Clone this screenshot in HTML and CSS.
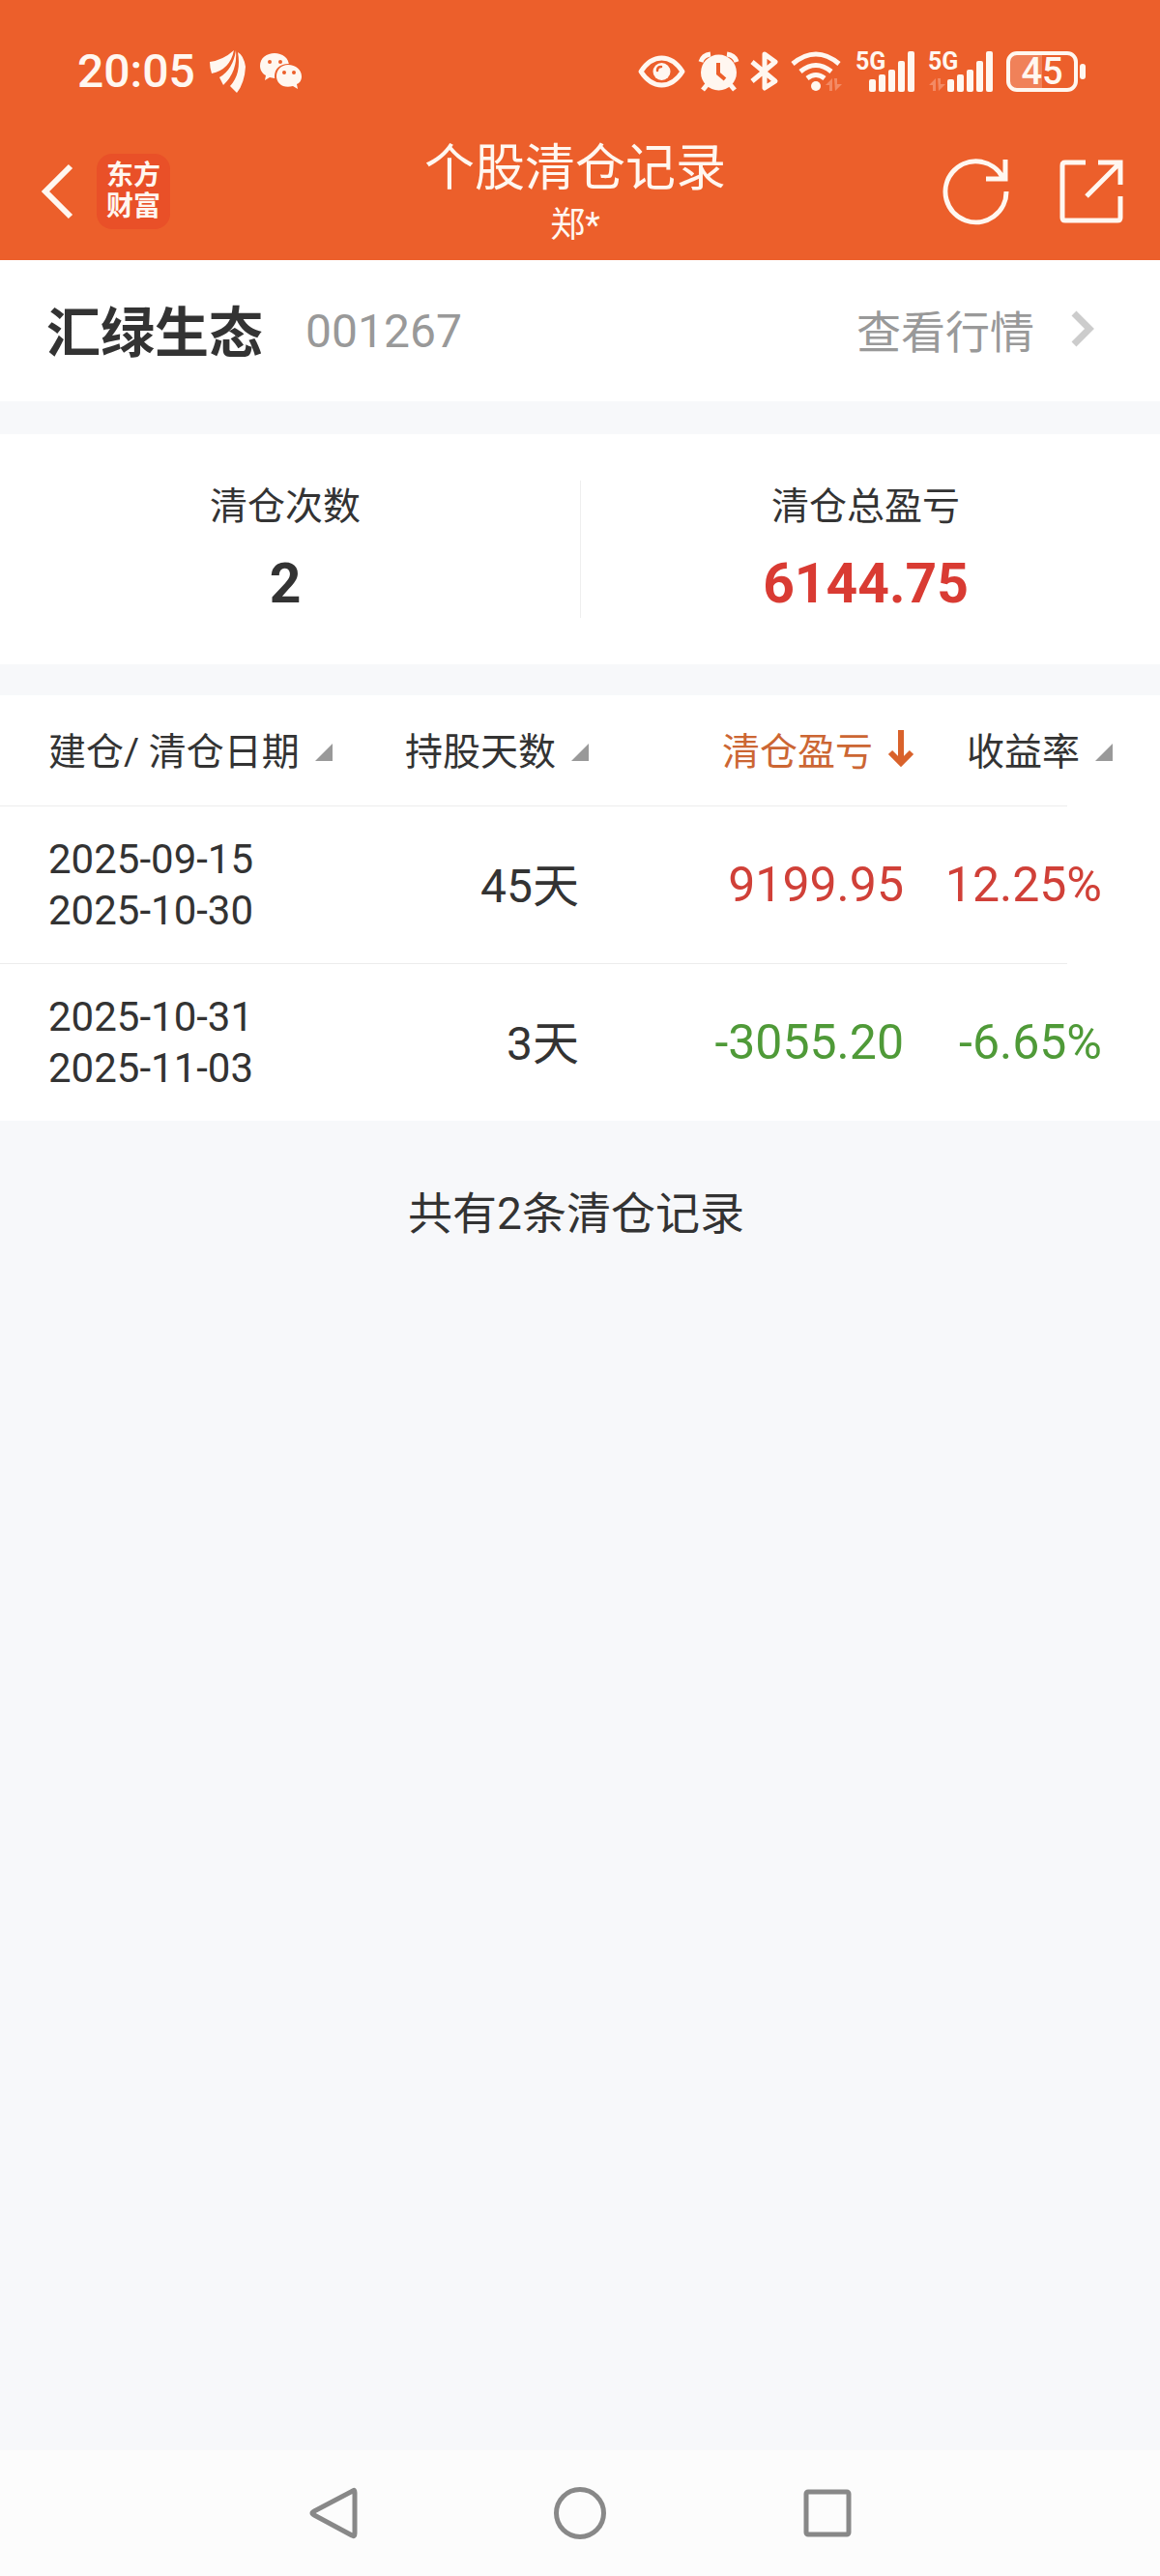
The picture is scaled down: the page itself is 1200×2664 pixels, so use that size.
FILE: index.html
```html
<!DOCTYPE html>
<html lang="zh-CN">
<head>
<meta charset="utf-8">
<meta name="viewport" content="width=device-width, initial-scale=1">
<title>个股清仓记录</title>
<link rel="stylesheet" href="styles.css">
</head>
<body>
<header class="top">
  <div class="status">
    <time class="clock">20:05</time>
    <svg class="feather" width="38" height="44" viewBox="0 0 38 44" fill="currentColor" aria-hidden="true"><path d="M0 12Q14 10 25 0Q21 20 2 24Q0 18 0 12ZM27 0Q29 22 14 36L10 28Q24 20 27 0ZM29 2Q35 5 37 17Q36 34 28 44L21 37Q33 24 29 2Z"/></svg>
    <svg class="wechat" width="44" height="38" viewBox="0 0 44 38" aria-hidden="true"><path fill="currentColor" d="M15 0C23 0 30 5 30 13C30 21 23 26 15 26L10 25L5 28L6 23C2 21 0 17 0 13C0 5 7 0 15 0Z"/><path class="cut" d="M29 11C37 11 44 16 44 24C44 28 42 31 39 33L40 37L34 35C23 38 15 32 15 24C15 16 21 11 29 11Z"/><path fill="currentColor" d="M29 12C37 12 43 17 43 24C43 28 41 31 38 32L39 37L34 34C24 37 17 31 17 24C17 17 22 12 29 12Z"/><g class="hole"><circle cx="10" cy="9" r="2"/><circle cx="21" cy="9" r="2"/><circle cx="25" cy="20" r="2"/><circle cx="35" cy="20" r="2"/></g></svg>
    <div class="indicators">
      <svg width="49" height="34" viewBox="0 0 49 34" fill="none" aria-hidden="true"><path d="M3 17Q12 3 24.500 3Q37 3 46 17Q37 31 24.500 31Q12 31 3 17Z" stroke="currentColor" stroke-width="5" stroke-linejoin="round"/><circle cx="24.500" cy="17" r="9" fill="currentColor"/><path class="ink" d="M20 16Q20 12 24 12" stroke-width="2.500" stroke-linecap="round"/></svg>
      <svg width="41" height="42" viewBox="0 0 41 42" aria-hidden="true"><g fill="none" stroke="currentColor" stroke-width="5"><path d="M2 11Q4 4 12 3M29 3Q37 4 39 11M9 34L4 40M32 34L37 40"/></g><circle cx="20.500" cy="22" r="18.500" fill="currentColor"/><path class="ink" d="M20 12V23L27 29" fill="none" stroke-width="4"/></svg>
      <svg width="27" height="42" viewBox="0 0 27 42" fill="none" stroke="currentColor" stroke-width="5" stroke-linejoin="round" aria-hidden="true"><path d="M0 11L24 31L13 38V3L24 11L0 31"/></svg>
      <svg width="52" height="42" viewBox="0 0 52 42" fill="none" stroke="currentColor" stroke-width="5" aria-hidden="true"><path d="M1 13Q25-7 49 13M9 21Q25 8 41 21M16 28Q25 21 34 28"/><circle cx="25" cy="36" r="5" fill="currentColor" stroke="none"/><path class="faint" d="M35 35L42 28V41H39V35ZM44 28H47V34H52L45 41Z"/></svg>
      <svg width="61" height="42" viewBox="0 0 61 42" fill="currentColor" role="img" aria-label="5G"><text class="net" x="0" y="19">5G</text><rect x="14" y="29" width="7" height="13" rx="2"/><rect x="24" y="24" width="7" height="18" rx="2"/><rect x="34" y="19" width="7" height="23" rx="2"/><rect x="44" y="10" width="7" height="32" rx="2"/><rect x="54" y="0" width="7" height="42" rx="2"/></svg>
      <svg width="67" height="42" viewBox="0 0 67 42" fill="currentColor" role="img" aria-label="5G"><text class="net" x="0" y="19">5G</text><path class="faint" d="M1 35L8 28V41H5V35ZM10 28H13V34H18L11 41Z"/><rect x="20" y="29" width="7" height="13" rx="2"/><rect x="30" y="24" width="7" height="18" rx="2"/><rect x="40" y="19" width="7" height="23" rx="2"/><rect x="50" y="10" width="7" height="32" rx="2"/><rect x="60" y="0" width="7" height="42" rx="2"/></svg>
      <svg width="82" height="42" viewBox="0 0 82 42" role="img" aria-label="45%"><path class="charge" d="M10 3H37V39H10Q3 39 3 32V10Q3 3 10 3Z"/><rect x="2" y="2" width="70" height="38" rx="9" fill="none" stroke="currentColor" stroke-width="4"/><rect x="76" y="13" width="6" height="16" rx="3" fill="currentColor"/><text class="level" x="37" y="34" text-anchor="middle">45</text></svg>
    </div>
  </div>
  <div class="bar">
    <div class="lead">
      <button class="icon-button" type="button" aria-label="返回"><svg width="32" height="56" viewBox="0 0 32 56" fill="none" stroke="currentColor" stroke-width="6"><path d="M30 2L4 28L30 54"/></svg></button>
      <a class="logo" href="#">东方<br>财富</a>
    </div>
    <div class="heading"><h1>个股清仓记录</h1><p>郑*</p></div>
    <div class="tools">
      <button class="icon-button" type="button" aria-label="刷新"><svg width="68" height="68" viewBox="0 0 68 68" fill="none" stroke="currentColor" stroke-width="5"><path d="M65 34A31.500 31.500 0 1 1 61 19M44 21H64V1"/></svg></button>
      <button class="icon-button" type="button" aria-label="分享"><svg width="66" height="66" viewBox="0 0 66 66" fill="none" stroke="currentColor" stroke-width="5"><path d="M27 3H6Q3 3 3 6V60Q3 63 6 63H60Q63 63 63 60V38M40 3H63V26M63 3L28 38"/></svg></button>
    </div>
  </div>
</header>
<main>
  <section class="stock">
    <h2>汇绿生态</h2>
    <span class="code">001267</span>
    <a class="quote" href="#">查看行情<svg width="24" height="38" viewBox="0 0 24 38" fill="none" stroke-width="7" aria-hidden="true"><path d="M3 3L19 19L3 35"/></svg></a>
  </section>
  <dl class="summary">
    <div><dt>清仓次数</dt><dd>2</dd></div>
    <div><dt>清仓总盈亏</dt><dd class="total">6144.75</dd></div>
  </dl>
  <table>
    <colgroup><col class="c-date"><col class="c-days"><col class="c-profit"><col class="c-rate"></colgroup>
    <thead>
      <tr>
        <th scope="col"><button class="sort" type="button">建仓/ 清仓日期<svg width="18" height="26" viewBox="0 0 18 26" aria-hidden="true"><path d="M18 8V26H0Z"/></svg></button></th>
        <th scope="col"><button class="sort" type="button">持股天数<svg width="18" height="26" viewBox="0 0 18 26" aria-hidden="true"><path d="M18 8V26H0Z"/></svg></button></th>
        <th scope="col" aria-sort="descending"><button class="sort active" type="button">清仓盈亏<svg width="26" height="38" viewBox="0 0 26 38" aria-hidden="true"><path d="M13 0V34M2 23L13 34L24 23"/></svg></button></th>
        <th scope="col"><button class="sort" type="button">收益率<svg width="18" height="26" viewBox="0 0 18 26" aria-hidden="true"><path d="M18 8V26H0Z"/></svg></button></th>
      </tr>
    </thead>
    <tbody>
      <tr><td>2025-09-15<br>2025-10-30</td><td class="days">45天</td><td class="up">9199.95</td><td class="up">12.25%</td></tr>
      <tr><td>2025-10-31<br>2025-11-03</td><td class="days">3天</td><td class="down">-3055.20</td><td class="down">-6.65%</td></tr>
    </tbody>
  </table>
  <p class="count">共有2条清仓记录</p>
</main>
<nav class="system" aria-label="系统导航">
  <button class="icon-button" type="button" aria-label="返回"><svg width="54" height="54" viewBox="0 0 54 54"><path d="M48 4Q50 2 50 6V48Q50 52 47 50L8 29Q4 27 8 25Z"/></svg></button>
  <button class="icon-button" type="button" aria-label="主页"><svg width="54" height="54" viewBox="0 0 54 54"><circle cx="27" cy="27" r="24.500"/></svg></button>
  <button class="icon-button" type="button" aria-label="最近任务"><svg width="54" height="54" viewBox="0 0 54 54"><rect x="5" y="5" width="44" height="44" rx="2"/></svg></button>
</nav>
</body>
</html>
```
FILE: styles.css
```css
* {
  box-sizing: border-box;
}

body {
  display: flex;
  flex-direction: column;
  min-height: 100vh;
  margin: 0;
  background: #f7f8fa;
  color: #333;
  font-family: Roboto, "Noto Sans CJK SC", sans-serif;
}

h1,
h2,
p,
dl,
dd {
  margin: 0;
}

svg {
  display: block;
  flex: none;
  overflow: visible;
}

a {
  color: inherit;
  text-decoration: none;
}

button {
  padding: 0;
  border: 0;
  background: none;
  color: inherit;
  font: inherit;
}

/* Header */
.top {
  background: #ec5f2b;
  color: #fff7f0;
}

.status {
  display: flex;
  align-items: center;
  height: 100px;
  padding: 48px 77px 0 80px;
}

.clock {
  font-size: 48px;
  font-weight: 500;
  line-height: 52px;
}

.feather {
  margin-left: 15px;
}

.wechat {
  margin-left: 14px;
}

.cut,
.hole {
  fill: #ec5f2b;
}

.ink {
  stroke: #ec5f2b;
}

.faint {
  fill: #f38a64;
  stroke: none;
}

.charge {
  fill: #f08159;
}

.indicators {
  display: flex;
  align-items: center;
  gap: 14px;
  margin-left: auto;
}

.net {
  font-size: 25px;
  font-weight: 700;
}

.level {
  fill: currentColor;
  font-size: 38px;
  font-weight: 500;
}

.bar {
  display: grid;
  grid-template-columns: 1fr auto 1fr;
  align-items: center;
  padding: 42px 38px 11px 28px;
}

.lead,
.tools {
  display: flex;
  align-items: center;
  padding-bottom: 4px;
}

.lead {
  gap: 25px;
  padding-left: 15px;
}

.tools {
  justify-content: flex-end;
  gap: 52px;
}

.logo {
  padding: 7px 10px;
  border-radius: 16px;
  background: #e95028;
  font-size: 28px;
  font-weight: 700;
  line-height: 32px;
}

.heading {
  text-align: center;
}

.heading h1 {
  font-size: 52px;
  font-weight: 400;
  line-height: 66px;
}

.heading p {
  font-size: 36px;
  line-height: 50px;
}

/* Stock row */
.stock {
  display: flex;
  align-items: center;
  height: 146px;
  padding: 0 68px 0 48px;
  background: #fff;
}

.stock h2 {
  padding-bottom: 6px;
  font-size: 56px;
  font-weight: 700;
}

.code {
  margin-left: 44px;
  color: #999;
  font-size: 48px;
}

.quote {
  display: flex;
  align-items: center;
  gap: 38px;
  margin-left: auto;
  padding-bottom: 4px;
  color: #999;
  font-size: 46px;
}

.quote svg {
  stroke: #ccc;
}

/* Totals */
.summary {
  display: grid;
  grid-template-columns: 1fr 1fr;
  margin: 34px 0 32px;
  padding: 48px 0;
  background: #fff;
  text-align: center;
}

.summary div {
  padding-right: 10px;
}

.summary div + div {
  border-left: 1px solid #eee;
}

.summary dt {
  font-size: 39px;
  line-height: 54px;
}

.summary dd {
  padding-top: 18px;
  font-size: 57px;
  font-weight: 700;
  line-height: 70px;
}

.summary .total {
  color: #d93b33;
}

/* Records */
table {
  width: 100%;
  table-layout: fixed;
  border-collapse: collapse;
  background: #fff;
}

.c-date {
  width: 32%;
}

.c-days {
  width: 19%;
}

.c-profit {
  width: 28%;
}

.c-rate {
  width: 21%;
}

th,
td {
  padding: 0;
  text-align: right;
  white-space: nowrap;
}

th:first-child,
td:first-child {
  padding-left: 50px;
  text-align: left;
}

th {
  height: 114px;
  padding: 0 3px 4px 0;
  font-size: 39px;
  font-weight: 400;
}

th:last-child {
  padding-right: 49px;
}

.sort {
  display: inline-flex;
  align-items: center;
  gap: 16px;
  vertical-align: middle;
}

.sort svg {
  fill: #999;
}

.active {
  color: #cc6633;
}

.active svg {
  fill: none;
  stroke: #d9622b;
  stroke-width: 6;
}

tbody tr {
  background: linear-gradient(#ececec, #ececec) left top / 92% 1px no-repeat;
}

td {
  height: 163px;
  padding-right: 13px;
  font-size: 50px;
}

td:first-child {
  font-size: 42px;
  line-height: 53px;
}

td:last-child {
  padding-right: 60px;
}

td.days {
  padding-bottom: 6px;
  font-size: 48px;
}

.up {
  color: #d04038;
}

.down {
  color: #4f9a38;
}

.count {
  padding: 62px 8px 64px 0;
  font-size: 46px;
  line-height: 68px;
  text-align: center;
}

/* System navigation */
.system {
  display: flex;
  justify-content: center;
  height: 130px;
  margin-top: auto;
  background: #fcfcfc;
}

.system .icon-button {
  display: grid;
  place-items: center;
  width: 256px;
}

.system svg {
  fill: none;
  stroke: #888;
  stroke-width: 5;
}
```
